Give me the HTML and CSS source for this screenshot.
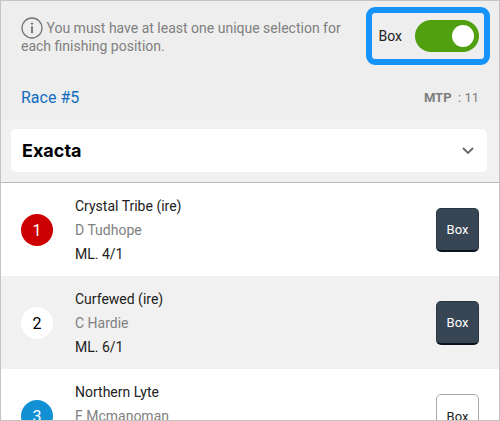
FILE: index.html
```html
<!DOCTYPE html>
<html lang="en">
<head>
    <meta charset="UTF-8">
    <meta name="viewport" content="width=device-width, initial-scale=1.0">
    <title>Race #5 - Exacta</title>
    <link rel="stylesheet" href="styles.css">
</head>
<body>
    <main class="bet-panel">
        <header class="panel-header">
            <div class="notice-row">
                <p class="notice">
                    <svg class="info-icon" viewBox="0 0 22 22" aria-hidden="true">
                        <circle cx="11" cy="11" r="10" fill="none" stroke="#757575" stroke-width="1.3"/>
                        <circle cx="11" cy="6.6" r="1.2" fill="#757575"/>
                        <path d="M11 9.3v7" stroke="#757575" stroke-width="1.9"/>
                    </svg>
                    You must have at least one unique selection for each finishing position.
                </p>
                <label class="box-toggle" for="boxAll">
                    Box
                    <input type="checkbox" id="boxAll" class="switch" checked>
                </label>
            </div>
            <div class="race-row">
                <a href="#" class="race-link">Race #5</a>
                <span class="mtp"><b>MTP</b> &nbsp;: 11</span>
            </div>
        </header>

        <div class="bet-type">
            <div class="select-wrap">
                <select class="bet-select" id="betType" aria-label="Bet type">
                    <option>Exacta</option>
                </select>
                <svg class="chevron" viewBox="0 0 12 8" aria-hidden="true">
                    <path d="M1.5 1.5L6 6l4.5-4.5" fill="none" stroke="#666" stroke-width="1.8" stroke-linecap="round"/>
                </svg>
            </div>
        </div>

        <ul class="runners">
            <li class="runner">
                <span class="number red">1</span>
                <div class="details">
                    <span>Crystal Tribe (ire)</span>
                    <span class="jockey">D Tudhope</span>
                    <span>ML. 4/1</span>
                </div>
                <button type="button" class="box-btn selected">Box</button>
            </li>
            <li class="runner">
                <span class="number white">2</span>
                <div class="details">
                    <span>Curfewed (ire)</span>
                    <span class="jockey">C Hardie</span>
                    <span>ML. 6/1</span>
                </div>
                <button type="button" class="box-btn selected">Box</button>
            </li>
            <li class="runner">
                <span class="number blue">3</span>
                <div class="details">
                    <span>Northern Lyte</span>
                    <span class="jockey">F Mcmanoman</span>
                </div>
                <button type="button" class="box-btn">Box</button>
            </li>
        </ul>
    </main>
</body>
</html>
```
FILE: styles.css
```css
* {
    box-sizing: border-box;
}

body {
    margin: 0;
    font-family: Roboto, 'Liberation Sans', sans-serif;
    font-size: 14px;
    color: #222;
}

.bet-panel {
    height: 100vh;
    overflow: hidden;
    border: 1px solid #c4c4c4;
    background-color: #fff;
}

.panel-header {
    background-color: #eee;
    padding: 6px 9px 12px 20px;
}

.notice-row {
    display: flex;
    justify-content: space-between;
    align-items: flex-start;
    gap: 16px;
}

.notice {
    flex: 1;
    margin: 0;
    padding-top: 10px;
    font-size: 14px;
    line-height: 15px;
    color: #808080;
}

.info-icon {
    width: 22px;
    height: 22px;
    vertical-align: -6px;
}

.box-toggle {
    display: flex;
    align-items: center;
    gap: 13px;
    padding: 7px 5px 7px 6px;
    border: 6px solid #1593fb;
    border-radius: 9px;
}

.switch {
    appearance: none;
    display: flex;
    align-items: center;
    justify-content: flex-end;
    width: 64px;
    height: 32px;
    margin: 0;
    padding: 5px;
    border-radius: 16px;
    background-color: #50a010;
    cursor: pointer;
}

.switch::before {
    content: "";
    width: 22px;
    height: 22px;
    border-radius: 50%;
    background-color: #fff;
}

.switch:not(:checked) {
    justify-content: flex-start;
    background-color: #aaa;
}

.race-row {
    display: flex;
    justify-content: space-between;
    align-items: center;
    margin-top: 23px;
    padding-right: 11px;
    line-height: 20px;
}

.race-link {
    font-size: 16px;
    color: #0f6cbd;
    text-decoration: none;
}

.mtp {
    font-size: 13px;
    color: #7d7d7d;
}

.bet-type {
    padding: 9px 12px 10px 10px;
    background-color: #f1f1f1;
    border-bottom: 1px solid #bbb;
}

.select-wrap {
    display: grid;
    align-items: center;
}

.bet-select {
    grid-area: 1 / 1;
    appearance: none;
    width: 100%;
    height: 43px;
    padding: 0 11px;
    border: none;
    border-radius: 5px;
    background-color: #fff;
    font-family: Inter, sans-serif;
    font-size: 18px;
    font-weight: 700;
    color: #000;
}

.chevron {
    grid-area: 1 / 1;
    justify-self: end;
    width: 12px;
    height: 8px;
    margin-right: 13px;
    pointer-events: none;
}

.runners {
    list-style: none;
    margin: 0;
    padding: 0;
}

.runner {
    display: flex;
    align-items: center;
    padding: 11px 20px 10px;
}

.runner:nth-child(even) {
    background-color: #f1f1f1;
}

.number {
    display: flex;
    align-items: center;
    justify-content: center;
    width: 32px;
    height: 32px;
    border-radius: 50%;
    font-size: 16px;
}

.red {
    background-color: #c00;
    color: #fff;
}

.white {
    background-color: #fff;
    color: #000;
}

.blue {
    background-color: #1290d4;
    color: #fff;
}

.details {
    display: flex;
    flex: 1;
    flex-direction: column;
    min-height: 72px;
    margin-left: 22px;
    line-height: 24px;
}

.jockey {
    color: #808080;
}

.box-btn {
    width: 43px;
    height: 44px;
    padding: 0;
    border: 1px solid #aaa;
    border-radius: 5px;
    background-color: #fff;
    font-family: inherit;
    font-size: 13px;
    color: #222;
    cursor: pointer;
}

.box-btn.selected {
    border-color: #2a3644;
    border-bottom: 2px solid #0c121c;
    background-color: #384554;
    color: #fff;
}
```
